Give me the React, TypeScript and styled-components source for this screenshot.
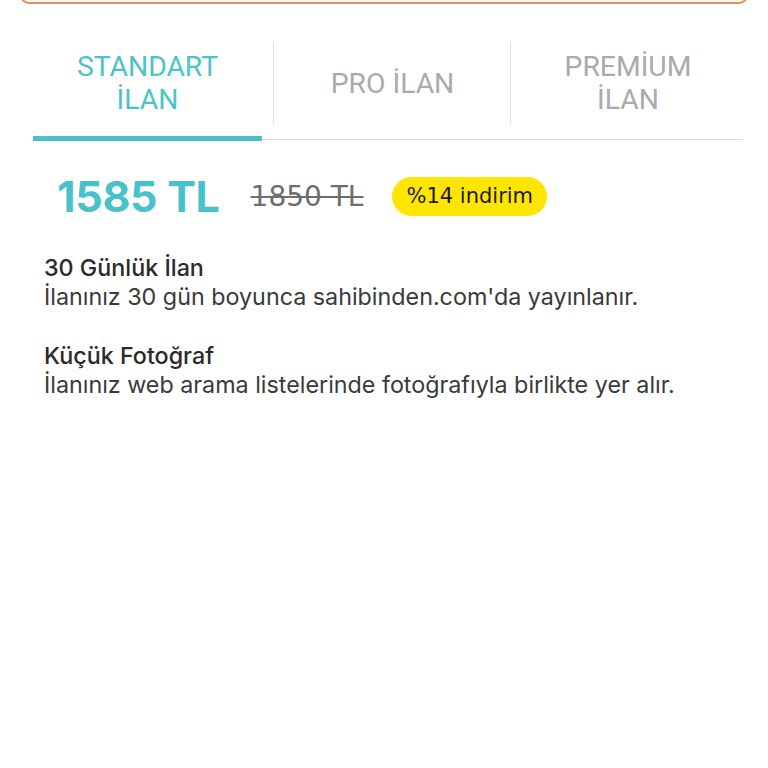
import React from 'react';
import styled, { createGlobalStyle } from 'styled-components';

const GlobalStyle = createGlobalStyle`
  html, body {
    margin: 0;
    padding: 0;
    background: #ffffff;
  }
  body {
    font-family: Inter, 'Noto Sans', sans-serif;
  }
`;

const tabs = [
  { label: 'STANDART İLAN', lines: ['STANDART', 'İLAN'], shift: -12 },
  { label: 'PRO İLAN', lines: ['PRO İLAN'], shift: 0 },
  { label: 'PREMİUM İLAN', lines: ['PREMİUM', 'İLAN'], shift: 2 },
];

const features = [
  {
    title: '30 Günlük İlan',
    text: "İlanınız 30 gün boyunca sahibinden.com'da yayınlanır.",
  },
  {
    title: 'Küçük Fotoğraf',
    text: 'İlanınız web arama listelerinde fotoğrafıyla birlikte yer alır.',
  },
];

const App = () => {
  return (
    <Page>
      <GlobalStyle />
      <TopBox />
      <TabBar>
        {tabs.map((tab, i) => (
          <Tab key={tab.label} last={i === tabs.length - 1}>
            <TabLabel active={i === 0} shift={tab.shift}>
              {tab.lines.map((line) => (
                <span key={line}>{line}</span>
              ))}
            </TabLabel>
            {i === 0 && <Indicator />}
          </Tab>
        ))}
      </TabBar>
      <PriceRow>
        <Price>1585 TL</Price>
        <OldPrice>1850 TL</OldPrice>
        <Badge>%14 indirim</Badge>
      </PriceRow>
      <Features>
        {features.map((f) => (
          <Feature key={f.title}>
            <FeatureTitle>{f.title}</FeatureTitle>
            <FeatureText>{f.text}</FeatureText>
          </Feature>
        ))}
      </Features>
    </Page>
  );
};

export default App;

const Page = styled.div`
  width: 768px;
  height: 768px;
  overflow: hidden;
  background: #fff;
`;

const TopBox = styled.div`
  margin: -40px 20px 0 20px;
  height: 40px;
  border: 2.5px solid #e98b4c;
  border-radius: 9px;
`;

const TabBar = styled.div`
  display: grid;
  grid-template-columns: 241px 237px 1fr;
  margin: 38px 25px 0 33px;
  border-bottom: 1.5px solid #dcdcdc;
`;

const Tab = styled.div<{ last?: boolean }>`
  position: relative;
  display: flex;
  flex-direction: column;
  padding-bottom: 15px;

  &::after {
    content: '';
    display: ${(p) => (p.last ? 'none' : 'block')};
    position: absolute;
    right: 0;
    top: 0;
    height: 82px;
    width: 1.5px;
    background: #e0e0e0;
  }
`;

const TabLabel = styled.div<{ active?: boolean; shift: number }>`
  height: 82px;
  display: flex;
  flex-direction: column;
  align-items: center;
  justify-content: center;
  transform: translateX(${(p) => p.shift / 2}px);
  font-family: Roboto, 'Liberation Sans', sans-serif;
  font-size: 28.3px;
  line-height: 33px;
  color: ${(p) => (p.active ? '#4ac3c9' : '#aaaaaa')};
`;

const Indicator = styled.div`
  position: absolute;
  left: 0;
  right: 12px;
  bottom: -2px;
  height: 5px;
  background: #4cc2c8;
`;

const PriceRow = styled.div`
  display: flex;
  align-items: center;
  padding: 35px 0 0 57px;
  height: 42px;
`;

const Price = styled.div`
  font-size: 43px;
  font-weight: 700;
  color: #47c2cb;
  letter-spacing: -0.3px;
  margin-right: 31px;
`;

const OldPrice = styled.div`
  font-family: 'DejaVu Sans', sans-serif;
  font-size: 28px;
  color: #6e6e6e;
  text-decoration: line-through;
  text-decoration-thickness: 2px;
  margin-right: 29px;
`;

const Badge = styled.div`
  height: 39px;
  display: flex;
  align-items: center;
  padding: 0 14px;
  border-radius: 20px;
  background: #ffe500;
  font-family: 'DejaVu Sans', sans-serif;
  font-size: 21px;
  color: #1a1a1a;
`;

const Features = styled.div`
  display: flex;
  flex-direction: column;
  gap: 30px;
  padding: 36px 0 0 44px;
`;

const Feature = styled.div`
  display: flex;
  flex-direction: column;
`;

const FeatureTitle = styled.div`
  font-size: 23.3px;
  line-height: 29px;
  font-weight: 500;
  color: #2b2b2b;
`;

const FeatureText = styled.div`
  font-size: 23.3px;
  line-height: 29px;
  color: #3a3a3a;
`;
